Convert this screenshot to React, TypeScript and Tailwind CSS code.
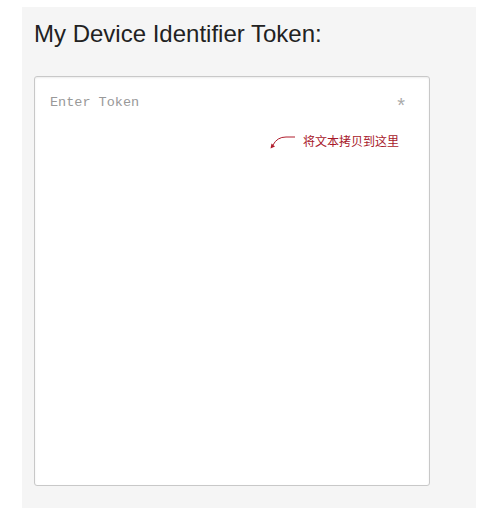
import React from 'react';

const App: React.FC = () => {
  return (
    <div className="w-[494px] h-[508px] bg-white pt-[7px] pl-[22px]">
      <div className="w-[454px] h-[501px] bg-[#f5f5f5] pt-[13px] pl-[12px] font-['Liberation_Sans',Arial,sans-serif]">
        <h1 className="text-[24px] leading-[28px] text-[#222] font-normal">My Device Identifier Token:</h1>

        {/* token box */}
        <div className="relative mt-[28px] w-[396px] h-[410px] bg-white border border-[#c8c8c8] rounded-[3px] shadow-[inset_0_1px_2px_rgba(0,0,0,0.08)]">
          <div className="flex items-start justify-between pl-[15px] pr-[24px] pt-[17px]">
            <span className="text-[13.5px] leading-[18px] text-[#999] font-['Liberation_Mono','DejaVu_Sans_Mono',monospace]">
              Enter Token
            </span>
            <span className="text-[20px] leading-[22px] text-[#aaa] font-['Liberation_Sans',Arial,sans-serif]">*</span>
          </div>

          {/* annotation */}
          <div className="absolute left-[234px] top-[55px] flex items-center gap-[6px]">
            <svg width="28" height="18" viewBox="0 0 28 18" fill="none">
              <path d="M26 5 L17 5 Q8 5 4 13" stroke="#b01c2c" strokeWidth="1" />
              <path d="M1.5 16.5 L2.5 11.5 L6 14.5 Z" fill="#b01c2c" />
            </svg>
            <span className="text-[12px] leading-[14px] text-[#a8182a] font-['Noto_Sans_CJK_SC',sans-serif]">
              将文本拷贝到这里
            </span>
          </div>
        </div>
      </div>
    </div>
  );
};

export default App;
